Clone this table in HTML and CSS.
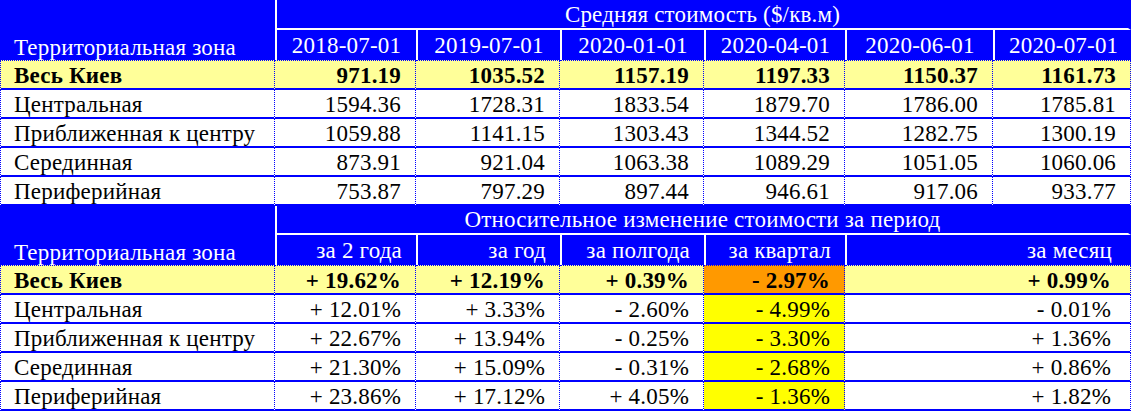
FILE: index.html
```html
<!DOCTYPE html>
<html lang="ru">
<head>
<meta charset="utf-8">
<title>Средняя стоимость</title>
<link rel="stylesheet" href="styles.css">
</head>
<body>
<table class="grid">
  <colgroup>
    <col class="c-zone">
    <col class="c-a">
    <col class="c-b">
    <col class="c-b">
    <col class="c-a">
    <col class="c-e">
    <col class="c-f">
  </colgroup>
  <tbody>
    <tr class="h1">
      <th class="zone-h" rowspan="2">Территориальная зона</th>
      <th class="group" colspan="6">Средняя стоимость ($/кв.м)</th>
    </tr>
    <tr class="h2">
      <th class="sub ctr">2018-07-01</th>
      <th class="sub ctr">2019-07-01</th>
      <th class="sub ctr">2020-01-01</th>
      <th class="sub ctr">2020-04-01</th>
      <th class="sub ctr">2020-06-01</th>
      <th class="sub ctr last">2020-07-01</th>
    </tr>
    <tr class="row total">
      <td class="name">Весь Киев</td>
      <td>971.19</td><td>1035.52</td><td>1157.19</td><td>1197.33</td><td>1150.37</td><td>1161.73</td>
    </tr>
    <tr class="row">
      <td class="name">Центральная</td>
      <td>1594.36</td><td>1728.31</td><td>1833.54</td><td>1879.70</td><td>1786.00</td><td>1785.81</td>
    </tr>
    <tr class="row">
      <td class="name">Приближенная к центру</td>
      <td>1059.88</td><td>1141.15</td><td>1303.43</td><td>1344.52</td><td>1282.75</td><td>1300.19</td>
    </tr>
    <tr class="row">
      <td class="name">Серединная</td>
      <td>873.91</td><td>921.04</td><td>1063.38</td><td>1089.29</td><td>1051.05</td><td>1060.06</td>
    </tr>
    <tr class="row">
      <td class="name">Периферийная</td>
      <td>753.87</td><td>797.29</td><td>897.44</td><td>946.61</td><td>917.06</td><td>933.77</td>
    </tr>

    <tr class="h1 second">
      <th class="zone-h" rowspan="2">Территориальная зона</th>
      <th class="group" colspan="6">Относительное изменение стоимости за период</th>
    </tr>
    <tr class="h2 second">
      <th class="sub">за 2 года</th>
      <th class="sub">за год</th>
      <th class="sub">за полгода</th>
      <th class="sub">за квартал</th>
      <th class="sub last wide" colspan="2">за месяц</th>
    </tr>
    <tr class="row total">
      <td class="name">Весь Киев</td>
      <td>+ 19.62%</td><td>+ 12.19%</td><td>+ 0.39%</td><td class="orange">- 2.97%</td><td class="wide" colspan="2">+ 0.99%</td>
    </tr>
    <tr class="row">
      <td class="name">Центральная</td>
      <td>+ 12.01%</td><td>+ 3.33%</td><td>- 2.60%</td><td class="yellow">- 4.99%</td><td class="wide" colspan="2">- 0.01%</td>
    </tr>
    <tr class="row">
      <td class="name">Приближенная к центру</td>
      <td>+ 22.67%</td><td>+ 13.94%</td><td>- 0.25%</td><td class="yellow">- 3.30%</td><td class="wide" colspan="2">+ 1.36%</td>
    </tr>
    <tr class="row">
      <td class="name">Серединная</td>
      <td>+ 21.30%</td><td>+ 15.09%</td><td>- 0.31%</td><td class="yellow">- 2.68%</td><td class="wide" colspan="2">+ 0.86%</td>
    </tr>
    <tr class="row">
      <td class="name">Периферийная</td>
      <td>+ 23.86%</td><td>+ 17.12%</td><td>+ 4.05%</td><td class="yellow">- 1.36%</td><td class="wide" colspan="2">+ 1.82%</td>
    </tr>
  </tbody>
</table>
</body>
</html>
```

FILE: styles.css
```css
html, body {
  margin: 0;
  padding: 0;
  background: #ffffff;
}

.grid {
  width: 1131px;
  table-layout: fixed;
  border-collapse: separate;
  border-spacing: 0;
  font-family: "Liberation Serif", "Times New Roman", serif;
  font-size: 23px;
  letter-spacing: 0.2px;
  line-height: 25px;
  color: #000000;
}

.c-zone { width: 275px; }
.c-a { width: 141px; }
.c-b { width: 144px; }
.c-e { width: 148px; }
.c-f { width: 138px; }

.grid th,
.grid td {
  box-sizing: border-box;
  padding: 0 14px;
  white-space: nowrap;
  overflow: hidden;
}

.grid th {
  background: #0000ff;
  color: #ffffff;
  font-weight: normal;
}

.h1 th {
  height: 30px;
}

.h2 th {
  height: 30px;
}

.h1.second th {
  height: 29px;
}

.h2.second th {
  height: 30px;
}

.zone-h {
  text-align: left;
  vertical-align: bottom;
  padding-bottom: 2px;
}

.group {
  text-align: center;
  vertical-align: middle;
  border-left: 2px solid #ffffff;
  border-bottom: 2px solid #ffffff;
  border-right: 3px solid #0000ff;
  padding-top: 2px;
}

.sub {
  text-align: right;
  vertical-align: middle;
  border-left: 2px solid #ffffff;
}

.sub.ctr {
  text-align: center;
}

.sub.last {
  border-right: 3px solid #0000ff;
}

.row td {
  height: 29px;
  text-align: right;
  vertical-align: middle;
  border-bottom: 2px solid #0000ff;
  border-right: 1px dotted #0000ff;
  padding-top: 1px;
}

.row td.name {
  text-align: left;
  padding-left: 13px;
  border-left: 1px dotted #0000ff;
}

.row.total td {
  height: 30px;
  background: #ffff99;
  font-weight: bold;
  border-top: 1px dotted #0000ff;
}

.row td.wide {
  padding-right: 19px;
}

.sub.wide {
  padding-right: 16px;
}

.row td.orange {
  background: #ff9900;
}

.row td.yellow {
  background: #ffff00;
}
```
